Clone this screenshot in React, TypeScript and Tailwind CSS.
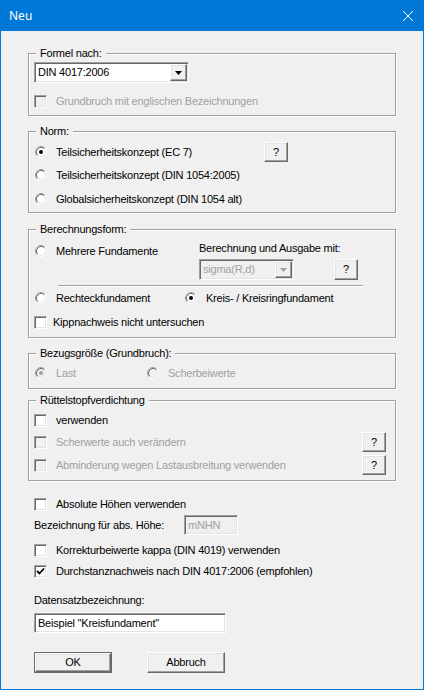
import React from "react";

const raised =
  "bg-[#f0f0f0] border border-t-white border-l-white border-r-[#696969] border-b-[#696969] shadow-[inset_-1px_-1px_0_#a0a0a0,inset_1px_1px_0_#e3e3e3] flex items-center justify-center";
const sunken =
  "border border-t-[#a0a0a0] border-l-[#a0a0a0] border-b-white border-r-white shadow-[inset_1px_1px_0_#696969,inset_-1px_-1px_0_#e3e3e3]";

function Radio({ checked, disabled }: { checked?: boolean; disabled?: boolean }) {
  return (
    <svg width="12" height="12" viewBox="0 0 12 12" className="shrink-0">
      <circle cx="6" cy="6" r="5" fill={disabled ? "#f0f0f0" : "#fff"} />
      <path d="M2.11 9.89 A5.5 5.5 0 0 1 9.89 2.11" fill="none" stroke="#a0a0a0" />
      <path d="M9.89 2.11 A5.5 5.5 0 0 1 2.11 9.89" fill="none" stroke="#fff" />
      <path d="M2.82 9.18 A4.5 4.5 0 0 1 9.18 2.82" fill="none" stroke="#696969" />
      <path d="M9.18 2.82 A4.5 4.5 0 0 1 2.82 9.18" fill="none" stroke="#e3e3e3" />
      {checked && <circle cx="6" cy="6" r="2" fill={disabled ? "#a0a0a0" : "#000"} />}
    </svg>
  );
}

function Check({ checked, disabled }: { checked?: boolean; disabled?: boolean }) {
  return (
    <div
      className={`w-[13px] h-[13px] shrink-0 flex items-center justify-center ${sunken} ${
        disabled ? "bg-[#f0f0f0]" : "bg-white"
      }`}
    >
      {checked && (
        <svg width="9" height="9" viewBox="0 0 9 9">
          <path d="M1 4 L3.5 6.5 L8 1.5" fill="none" stroke="#000" strokeWidth="1.8" />
        </svg>
      )}
    </div>
  );
}

function Arrow({ disabled }: { disabled?: boolean }) {
  return (
    <svg width="7" height="4" viewBox="0 0 7 4">
      <polygon points="0,0 7,0 3.5,4" fill={disabled ? "#a0a0a0" : "#000"} />
    </svg>
  );
}

function Combo({ value, width, disabled }: { value: string; width: string; disabled?: boolean }) {
  return (
    <div className={`${width} h-[21px] p-px flex ${sunken} ${disabled ? "bg-[#f0f0f0]" : "bg-white"}`}>
      <div className={`flex-1 pl-[2px] flex items-center ${disabled ? "text-[#a0a0a0]" : ""}`}>{value}</div>
      <div className={`w-[17px] h-full ${raised}`}>
        <Arrow disabled={disabled} />
      </div>
    </div>
  );
}

function Help({ h = "h-[20px]" }: { h?: string }) {
  return <div className={`w-[24px] ${h} ${raised}`}>?</div>;
}

function Group({ label, className, children }: { label: string; className?: string; children: React.ReactNode }) {
  return (
    <div
      className={`relative border border-[#a0a0a0] shadow-[inset_1px_1px_0_#fff,1px_1px_0_#fff] ${className ?? ""}`}
    >
      <span className="absolute -top-[8px] left-[7px] px-[4px] bg-[#f0f0f0] leading-[14px]">{label}</span>
      {children}
    </div>
  );
}

function RadioRow({
  label,
  checked,
  disabled,
  className,
}: {
  label: string;
  checked?: boolean;
  disabled?: boolean;
  className?: string;
}) {
  return (
    <div className={`flex items-center ${className ?? ""}`}>
      <Radio checked={checked} disabled={disabled} />
      <span className={`ml-[9px] ${disabled ? "text-[#a0a0a0]" : ""}`}>{label}</span>
    </div>
  );
}

function CheckRow({
  label,
  checked,
  disabled,
  gap = "ml-[9px]",
  className,
}: {
  label: string;
  checked?: boolean;
  disabled?: boolean;
  gap?: string;
  className?: string;
}) {
  return (
    <div className={`flex items-center h-[20px] ${className ?? ""}`}>
      <Check checked={checked} disabled={disabled} />
      <span className={`${gap} ${disabled ? "text-[#a0a0a0]" : ""}`}>{label}</span>
    </div>
  );
}

export default function App() {
  return (
    <div className="w-[424px] h-[690px] flex flex-col bg-[#f0f0f0] border border-t-0 border-[#0078d7] text-[11px] tracking-[-0.22px] leading-none text-black [font-family:Liberation_Sans,Arial,sans-serif] overflow-hidden">
      {/* Title bar */}
      <div className="h-[31px] shrink-0 bg-[#0078d7] -mx-px flex items-center justify-between pl-[9px] pr-[11px]">
        <span className="text-white text-[12px] tracking-normal [font-family:Noto_Sans,sans-serif]">Neu</span>
        <svg width="10" height="10" viewBox="0 0 10 10">
          <path d="M0 0 L10 10 M10 0 L0 10" stroke="#fff" strokeWidth="1" />
        </svg>
      </div>

      <div className="flex flex-col px-[27px] pt-[22px]">
        {/* Formel nach */}
        <Group label="Formel nach:" className="pt-[8px] pb-[4px] pl-[5px]">
          <Combo value="DIN 4017:2006" width="w-[155px]" />
          <CheckRow label="Grundbruch mit englischen Bezeichnungen" disabled className="mt-[8px]" />
        </Group>

        {/* Norm */}
        <Group label="Norm:" className="mt-[15px] pt-[9px] pb-[2px] pl-[6px]">
          <div className="flex items-center h-[22px]">
            <Radio checked />
            <span className="ml-[9px] w-[208px]">Teilsicherheitskonzept (EC 7)</span>
            <div className={`w-[24px] h-[20px] ${raised}`}>?</div>
          </div>
          <RadioRow label="Teilsicherheitskonzept (DIN 1054:2005)" className="h-[22px] mt-[1px]" />
          <RadioRow label="Globalsicherheitskonzept (DIN 1054 alt)" className="h-[22px] mt-[2px]" />
        </Group>

        {/* Berechnungsform */}
        <Group label="Berechnungsform:" className="mt-[16px] pt-[10px] pb-[5px] pl-[6px]">
          <div className="flex">
            <RadioRow label="Mehrere Fundamente" className="w-[164px] h-[22px]" />
            <div className="flex flex-col">
              <div className="h-[16px] flex items-center">Berechnung und Ausgabe mit:</div>
              <div className="flex mt-[3px]">
                <Combo value="sigma(R,d)" width="w-[95px]" disabled />
                <div className="ml-[40px]">
                  <Help h="h-[21px]" />
                </div>
              </div>
            </div>
          </div>
          <div className="mt-[5px] ml-[23px] w-[305px] border-t border-b border-t-[#a0a0a0] border-b-white" />
          <div className="flex h-[22px]">
            <RadioRow label="Rechteckfundament" className="w-[150px]" />
            <RadioRow label="Kreis- / Kreisringfundament" checked />
          </div>
          <CheckRow label="Kippnachweis nicht untersuchen" gap="ml-[6px]" className="mt-[3px] -ml-px" />
        </Group>

        {/* Bezugsgröße */}
        <Group label="Bezugsgröße (Grundbruch):" className="mt-[15px] pt-[8px] pb-[4px] pl-[6px]">
          <div className="flex h-[22px]">
            <RadioRow label="Last" checked disabled className="w-[112px]" />
            <RadioRow label="Scherbeiwerte" disabled />
          </div>
        </Group>

        {/* Rüttelstopfverdichtung */}
        <Group label="Rüttelstopfverdichtung" className="mt-[11px] pt-[8px] pb-[4px] pl-[5px] pr-[9px]">
          <div className="flex items-center h-[22px]">
            <CheckRow label="verwenden" />
          </div>
          <div className="flex items-center justify-between h-[22px]">
            <CheckRow label="Scherwerte auch verändern" disabled />
            <Help />
          </div>
          <div className="flex items-center justify-between h-[22px] mt-[1px]">
            <CheckRow label="Abminderung wegen Lastausbreitung verwenden" disabled />
            <Help />
          </div>
        </Group>

        {/* Lower section */}
        <div className="flex flex-col pl-[6px]">
          <CheckRow label="Absolute Höhen verwenden" className="mt-[13px]" />
          <div className="flex items-center h-[20px] mt-[1px]">
            <span className="w-[150px]">Bezeichnung für abs. Höhe:</span>
            <div className={`w-[54px] h-[20px] pl-[3px] flex items-center bg-[#f0f0f0] text-[#a0a0a0] ${sunken}`}>
              mNHN
            </div>
          </div>
          <CheckRow label="Korrekturbeiwerte kappa (DIN 4019) verwenden" className="mt-[5px]" />
          <CheckRow label="Durchstanznachweis nach DIN 4017:2006 (empfohlen)" checked className="mt-[1px]" />
          <div className="h-[16px] mt-[11px] flex items-center">Datensatzbezeichnung:</div>
          <div className={`w-[192px] h-[20px] mt-[5px] pl-[3px] flex items-center bg-white ${sunken}`}>
            Beispiel "Kreisfundament"
          </div>
          <div className="flex mt-[19px] gap-[35px]">
            <div className="border border-[#696969]">
              <div className={`w-[76px] h-[19px] ${raised}`}>OK</div>
            </div>
            <div className={`w-[78px] h-[21px] ${raised}`}>Abbruch</div>
          </div>
        </div>
      </div>
    </div>
  );
}
